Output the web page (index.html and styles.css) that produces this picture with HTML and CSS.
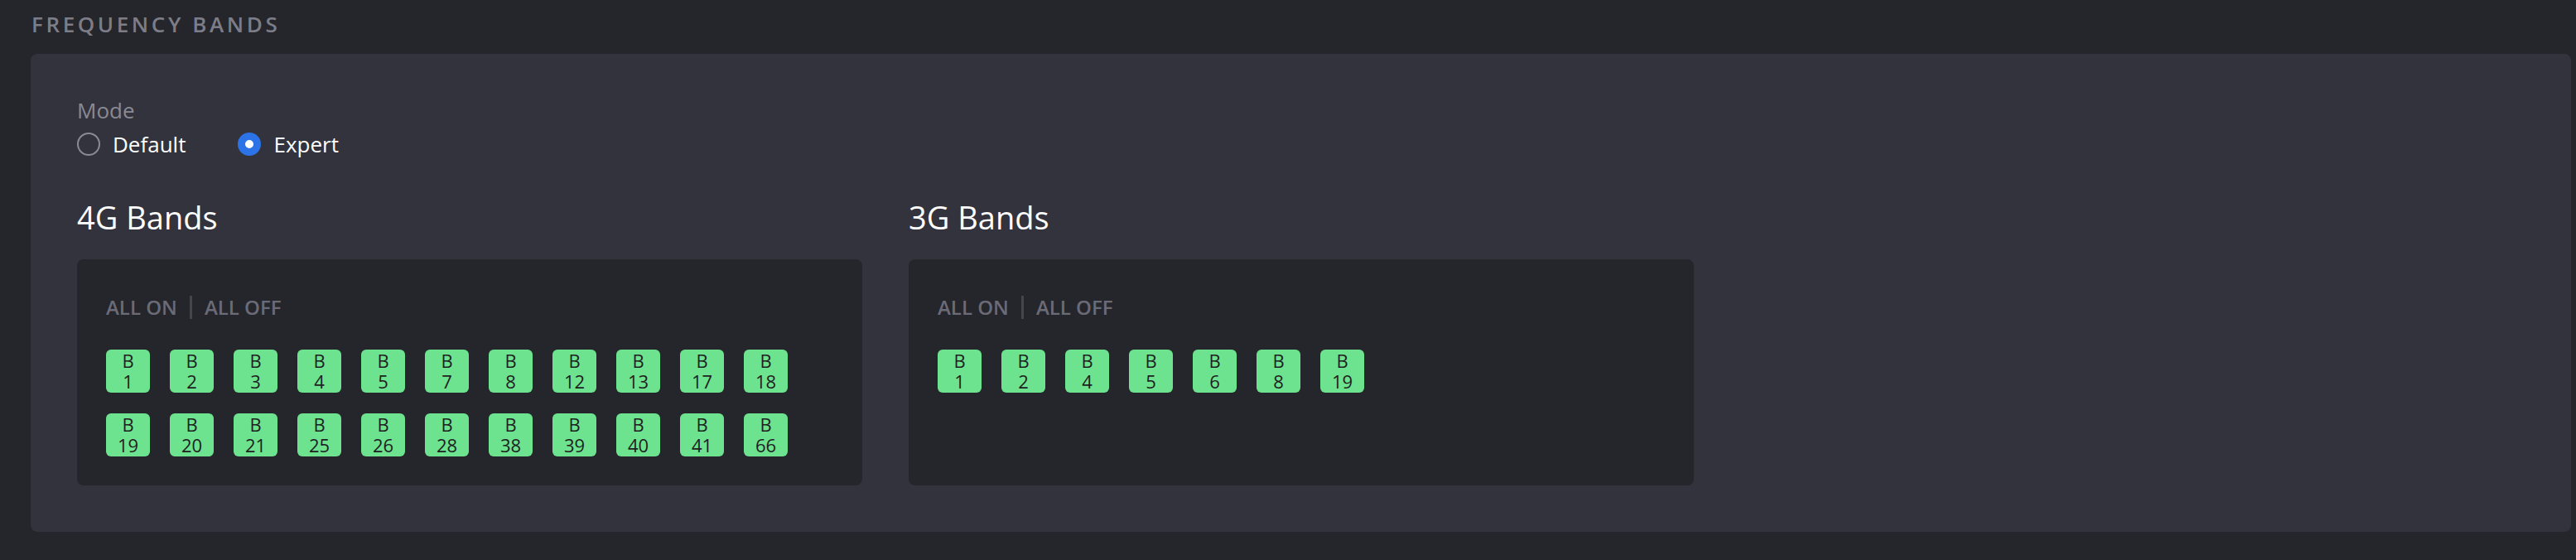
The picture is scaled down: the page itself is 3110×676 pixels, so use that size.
FILE: index.html
```html
<!DOCTYPE html>
<html lang="en">
<head>
  <meta charset="UTF-8" />
  <meta name="viewport" content="width=device-width, initial-scale=1.0"/>
  <title>Frequency Bands</title>
  <link rel="stylesheet" href="styles.css">
</head>
<body>

<div class="page">
  <h3 class="section-title">FREQUENCY BANDS</h3>

  <div class="panel">
    <div class="mode">
      <div class="mode-label">Mode</div>
      <div class="radios">
        <label class="radio"><span class="dot"></span>Default</label>
        <label class="radio checked"><span class="dot"></span>Expert</label>
      </div>
    </div>

    <div class="groups">
      <div class="group">
        <h2>4G Bands</h2>
        <div class="card">
          <div class="toggles">
            <span>ALL ON</span>
            <span class="sep"></span>
            <span>ALL OFF</span>
          </div>
          <div class="chips">
            <div class="chip"><span>B</span><span>1</span></div>
            <div class="chip"><span>B</span><span>2</span></div>
            <div class="chip"><span>B</span><span>3</span></div>
            <div class="chip"><span>B</span><span>4</span></div>
            <div class="chip"><span>B</span><span>5</span></div>
            <div class="chip"><span>B</span><span>7</span></div>
            <div class="chip"><span>B</span><span>8</span></div>
            <div class="chip"><span>B</span><span>12</span></div>
            <div class="chip"><span>B</span><span>13</span></div>
            <div class="chip"><span>B</span><span>17</span></div>
            <div class="chip"><span>B</span><span>18</span></div>
            <div class="chip"><span>B</span><span>19</span></div>
            <div class="chip"><span>B</span><span>20</span></div>
            <div class="chip"><span>B</span><span>21</span></div>
            <div class="chip"><span>B</span><span>25</span></div>
            <div class="chip"><span>B</span><span>26</span></div>
            <div class="chip"><span>B</span><span>28</span></div>
            <div class="chip"><span>B</span><span>38</span></div>
            <div class="chip"><span>B</span><span>39</span></div>
            <div class="chip"><span>B</span><span>40</span></div>
            <div class="chip"><span>B</span><span>41</span></div>
            <div class="chip"><span>B</span><span>66</span></div>
          </div>
        </div>
      </div>

      <div class="group">
        <h2>3G Bands</h2>
        <div class="card">
          <div class="toggles">
            <span>ALL ON</span>
            <span class="sep"></span>
            <span>ALL OFF</span>
          </div>
          <div class="chips">
            <div class="chip"><span>B</span><span>1</span></div>
            <div class="chip"><span>B</span><span>2</span></div>
            <div class="chip"><span>B</span><span>4</span></div>
            <div class="chip"><span>B</span><span>5</span></div>
            <div class="chip"><span>B</span><span>6</span></div>
            <div class="chip"><span>B</span><span>8</span></div>
            <div class="chip"><span>B</span><span>19</span></div>
          </div>
        </div>
      </div>
    </div>
  </div>
</div>

</body>
</html>
```

FILE: styles.css
```css
body {
  margin: 0;
  background: #25262b;
  font-family: "Open Sans", "Liberation Sans", sans-serif;
  color: #fff;
}
.page {
  padding: 11px 6px 34px 37px;
}
.section-title {
  margin: 0 0 18px 1px;
  font-size: 26px;
  line-height: 36px;
  font-weight: 600;
  letter-spacing: 3.6px;
  color: #7d7d88;
}
.panel {
  background: #33333d;
  border-radius: 8px;
  padding: 50px 56px 56px;
}
.mode-label {
  font-size: 26px;
  line-height: 36px;
  color: #8a8a94;
  margin-bottom: 5px;
}
.radios {
  display: flex;
  gap: 63px;
}
.radio {
  display: flex;
  align-items: center;
  gap: 15px;
  font-size: 26px;
  line-height: 36px;
  color: #fff;
}
.dot {
  width: 28px;
  height: 28px;
  box-sizing: border-box;
  border: 2px solid #8a8a94;
  border-radius: 50%;
}
.radio.checked .dot {
  border: 9px solid #2b73e6;
  background: #fff;
}
.groups {
  display: flex;
  gap: 56px;
  margin-top: 46px;
}
.group {
  width: 948px;
}
h2 {
  margin: 0 0 27px;
  font-size: 38px;
  line-height: 48px;
  font-weight: 400;
}
.card {
  background: #25262b;
  border-radius: 8px;
  padding: 42px 35px 35px;
  box-sizing: border-box;
  height: 273px;
}
.toggles {
  display: flex;
  align-items: center;
  font-size: 24px;
  line-height: 32px;
  color: #6b6b77;
  font-weight: 600;
}
.sep {
  width: 3px;
  height: 28px;
  background: #45454f;
  margin: 0 15px;
}
.chips {
  display: flex;
  flex-wrap: wrap;
  gap: 25px 24px;
  margin-top: 35px;
}
.chip {
  width: 53px;
  height: 52px;
  border-radius: 6px;
  background: #6ee38f;
  color: #1e1f22;
  display: flex;
  flex-direction: column;
  justify-content: center;
  align-items: center;
  font-size: 22px;
  line-height: 25px;
}
```
